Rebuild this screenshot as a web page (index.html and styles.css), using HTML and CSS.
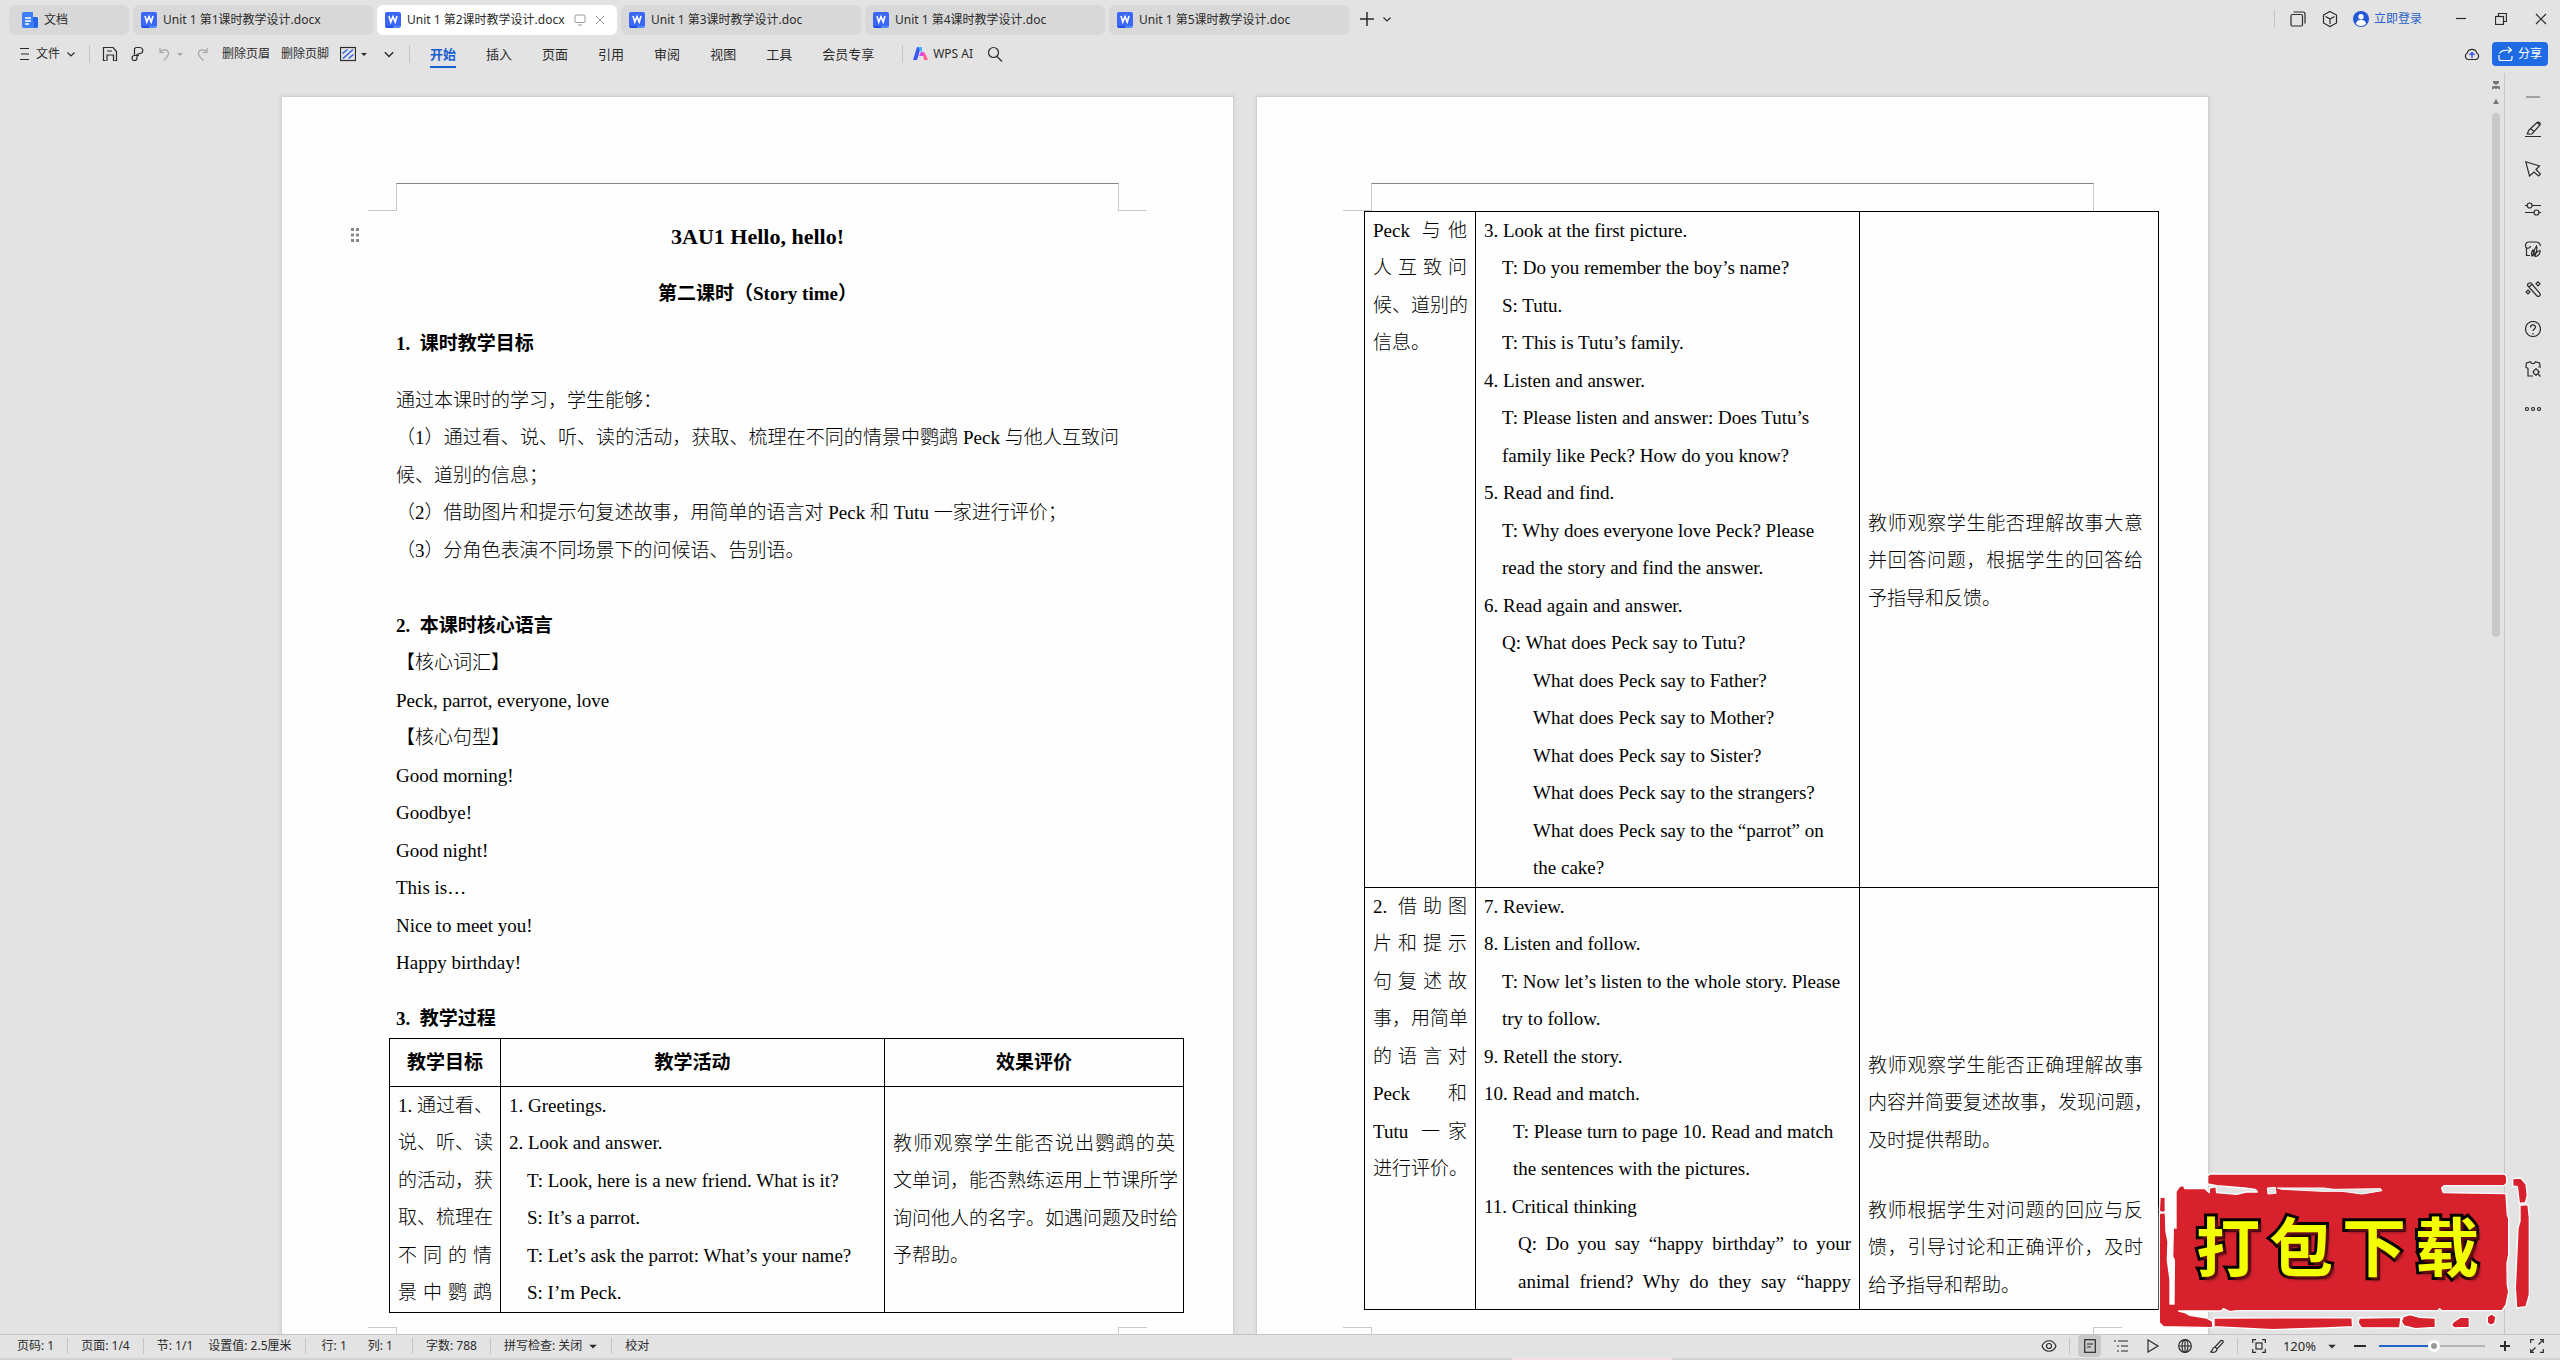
FILE: index.html
```html
<!DOCTYPE html>
<html lang="zh-CN">
<head>
<meta charset="utf-8">
<title>Unit 1 第2课时教学设计.docx</title>
<link rel="stylesheet" href="styles.css">
</head>
<body>
<svg width="0" height="0" class="defs" aria-hidden="true">
  <defs>
    <symbol id="w" viewBox="0 0 16 16"><path fill="#3b66f6" d="M2 0h12a2 2 0 0 1 2 2v12H0V2a2 2 0 0 1 2-2z"/><path fill="#1d4fe0" d="M0 14h8v2H2a2 2 0 0 1-2-2z"/><path fill="#4f8bff" d="M8 14h8a2 2 0 0 1-2 2H8z"/><path fill="none" stroke="#fff" stroke-width="1.6" d="M4 4l1.8 6L8 4.600l2.200 5.400L12 4"/></symbol>
    <symbol id="chev" viewBox="0 0 10 10"><path fill="none" stroke="currentColor" stroke-width="1.2" d="M1.500 3.500L5 7l3.500-3.500"/></symbol>
    <symbol id="caret" viewBox="0 0 8 8"><path fill="currentColor" d="M1 3h6L4 6z"/></symbol>
  </defs>
</svg>

<header class="titlebar">
  <div class="tabs">
    <button class="tab home"><svg width="16" height="16" viewBox="0 0 16 16"><path fill="#3f7ff5" d="M2 0h9v5h3a2 2 0 0 1 2 2v7a2 2 0 0 1-2 2H2a2 2 0 0 1-2-2V2a2 2 0 0 1 2-2z"/><path fill="#2563eb" d="M11 5h3a2 2 0 0 1 2 2v7a2 2 0 0 1-4 0z"/><path stroke="#fff" stroke-width="1.500" d="M3 6h6M3 9h6M3 12h4"/></svg>文档</button>
    <button class="tab"><svg width="16" height="16"><use href="#w"/></svg>Unit 1 第1课时教学设计.docx</button>
    <button class="tab active"><svg width="16" height="16"><use href="#w"/></svg>Unit 1 第2课时教学设计.docx
      <svg class="mon" width="12" height="12" viewBox="0 0 12 12"><rect x="1" y="1" width="10" height="7.500" rx="1"/><path d="M4 11h4"/></svg>
      <svg class="mon" width="10" height="10" viewBox="0 0 10 10"><path d="M1 1l8 8M9 1L1 9"/></svg></button>
    <button class="tab"><svg width="16" height="16"><use href="#w"/></svg>Unit 1 第3课时教学设计.doc</button>
    <button class="tab"><svg width="16" height="16"><use href="#w"/></svg>Unit 1 第4课时教学设计.doc</button>
    <button class="tab"><svg width="16" height="16"><use href="#w"/></svg>Unit 1 第5课时教学设计.doc</button>
  </div>
  <button class="newtab" aria-label="新建"><svg class="ln" width="16" height="16" viewBox="0 0 16 16"><path stroke-width="1.500" d="M8 1v14M1 8h14"/></svg><svg width="10" height="10"><use href="#chev"/></svg></button>
  <div class="winbar">
    <span class="sep"></span>
    <button aria-label="窗口"><svg class="ln" width="18" height="18" viewBox="0 0 18 18"><rect x="2" y="4.500" width="11.500" height="11.500" rx="1.500"/><path d="M4.500 2H14a2 2 0 0 1 2 2v9.500"/></svg></button>
    <button aria-label="应用"><svg class="ln" width="18" height="18" viewBox="0 0 18 18"><path d="M9 1.500l6.500 3.500v8L9 16.500 2.500 13V5zM4.500 6.500L9 9l4.500-2.500M9 9v5"/></svg></button>
    <button class="login"><svg width="16" height="16" viewBox="0 0 16 16"><circle cx="8" cy="8" r="8" fill="#2459d8"/><circle cx="8" cy="5.800" r="2.700" fill="#fff"/><path fill="#fff" d="M3 13c.5-3.500 2.500-4 5-4s4.500.5 5 4a7 7 0 0 1-10 0z"/></svg>立即登录</button>
    <div class="winctl">
      <button aria-label="最小化"><svg class="ln" width="12" height="12" viewBox="0 0 12 12"><path d="M1 5.500h10"/></svg></button>
      <button aria-label="还原"><svg class="ln" width="12" height="12" viewBox="0 0 12 12"><rect x=".5" y="3.500" width="8" height="8"/><path d="M3.500 3.500v-3h8v8h-3"/></svg></button>
      <button aria-label="关闭"><svg class="ln" width="12" height="12" viewBox="0 0 12 12"><path d="M1 1l10 10M11 1L1 11"/></svg></button>
    </div>
  </div>
</header>

<div class="toolbar">
  <button class="file"><svg class="ln" width="10" height="14" viewBox="0 0 10 14"><path d="M0 1.500h9M1 7h8M0 12.500h9"/></svg>文件<svg width="10" height="10"><use href="#chev"/></svg></button>
  <span class="sep"></span>
  <div class="quick">
    <button aria-label="保存"><svg class="ln" width="16" height="16" viewBox="0 0 16 16"><path d="M3.500 14.500h-2v-13h9.500l3.500 4v9h-2M5 15V9h6.500v6M5 5h5"/></svg></button>
    <button aria-label="格式刷"><svg class="ln" width="16" height="16" viewBox="0 0 16 16"><path d="M5.500 9.500V2.500L7 1.500h4a3 3 0 0 1 1.500 5.500L8 8.500V12a2.500 2.500 0 1 1-2.500-2.500H10"/></svg></button>
    <button class="dim" aria-label="撤销"><svg class="ln" width="16" height="16" viewBox="0 0 16 16"><path d="M4 2v4.500h4.500M4 6.500C6 3 12 3 12.500 7c.3 3-2 5-5 7.500"/></svg><svg width="8" height="8"><use href="#caret"/></svg></button>
    <button class="dim" aria-label="重做"><svg class="ln" width="16" height="16" viewBox="0 0 16 16"><path d="M12 2v4.500H7.500M12 6.500C10 3 4 3 3.500 7c-.3 3 2 5 5 7.500"/></svg></button>
    <button>删除页眉</button>
    <button>删除页脚</button>
    <button aria-label="底纹"><svg class="ln" width="16" height="16" viewBox="0 0 16 16"><rect x=".5" y="1.500" width="15" height="13"/><path stroke="#2f62d8" stroke-width="1.500" d="M2.500 7.500l5-4M3 12.500l10-9M8.500 12.500l5-4"/></svg><svg width="8" height="8"><use href="#caret"/></svg></button>
    <button class="more" aria-label="更多"><svg width="12" height="12"><use href="#chev"/></svg></button>
  </div>
  <span class="sep"></span>
  <nav class="menu">
    <button class="on">开始</button><button>插入</button><button>页面</button><button>引用</button><button>审阅</button><button>视图</button><button>工具</button><button>会员专享</button>
  </nav>
  <span class="sep"></span>
  <button class="ai"><svg width="15" height="13" viewBox="0 0 15 13"><path fill="#3b57f5" d="M4 0h4L4 13H0z"/><path fill="#42b7ff" d="M5 0h4v5L7 4z"/><path fill="#d545e8" d="M8 5h3l1 4H6z"/><path fill="#ff5c9a" d="M10 6l2 0 3 7h-4z"/></svg>WPS AI</button>
  <button aria-label="搜索"><svg class="ln" width="16" height="16" viewBox="0 0 16 16"><circle cx="6.500" cy="6.500" r="5"/><path d="M10 10.500l5 5"/></svg></button>
  <div class="share-group">
    <button aria-label="云同步"><svg class="ln" width="16" height="16" viewBox="0 0 16 16"><path d="M4 13.500a3.500 3.500 0 0 1-.8-6.500A5 5 0 0 1 12.800 7a3.500 3.500 0 0 1-.8 6.500z"/><path stroke="#3b57f5" stroke-width="1.500" d="M8 12V6.500M5.500 9L8 6.500 10.500 9"/></svg></button>
    <button class="share"><svg class="ln" width="15" height="15" viewBox="0 0 15 15"><path d="M1 9v3.500a2 2 0 0 0 2 2h9a2 2 0 0 0 2-2V10M1.500 7.500C3 4.500 6 4 13 4M10 1l3.500 3L10 7"/></svg>分享</button>
  </div>
</div>

<div class="main">
  <main class="workspace">
    <article class="page">
      <div class="margin-top"></div>
      <svg class="grip" width="10" height="14" viewBox="0 0 10 14" fill="#888"><path d="M1 0h3v3H1zM6 0h3v3H6zM1 5.500h3v3H1zM6 5.500h3v3H6zM1 11h3v3H1zM6 11h3v3H6z"/></svg>
      <h1>3AU1 Hello, hello!</h1>
      <h2 class="sub">第二课时（Story time）</h2>
      <h2>1.&nbsp; 课时教学目标</h2>
      <div class="lines">
        <p>通过本课时的学习，学生能够：</p>
        <p class="fill">（1）通过看、说、听、读的活动，获取、梳理在不同的情景中鹦鹉 Peck 与他人互致问</p>
        <p>候、道别的信息；</p>
        <p>（2）借助图片和提示句复述故事，用简单的语言对 Peck 和 Tutu 一家进行评价；</p>
        <p>（3）分角色表演不同场景下的问候语、告别语。</p>
        <p>&nbsp;</p>
        <p><b>2.&nbsp; 本课时核心语言</b></p>
        <p>【核心词汇】</p>
        <p>Peck, parrot, everyone, love</p>
        <p>【核心句型】</p>
        <p>Good morning!</p>
        <p>Goodbye!</p>
        <p>Good night!</p>
        <p>This is…</p>
        <p>Nice to meet you!</p>
        <p>Happy birthday!</p>
      </div>
      <h2>3.&nbsp; 教学过程</h2>
      <table>
        <colgroup><col class="goal"><col class="act"><col class="eval"></colgroup>
        <thead><tr><th>教学目标</th><th>教学活动</th><th>效果评价</th></tr></thead>
        <tbody><tr>
          <td class="fillall"><p>1. 通过看、</p><p>说、听、读</p><p>的活动，获</p><p>取、梳理在</p><p>不同的情</p><p>景中鹦鹉</p></td>
          <td><p>1. Greetings.</p><p>2. Look and answer.</p><p class="in">T: Look, here is a new friend. What is it?</p><p class="in">S: It’s a parrot.</p><p class="in">T: Let’s ask the parrot: What’s your name?</p><p class="in">S: I’m Peck.</p></td>
          <td class="mid"><p class="fill">教师观察学生能否说出鹦鹉的英</p><p class="fill">文单词，能否熟练运用上节课所学</p><p class="fill">询问他人的名字。如遇问题及时给</p><p>予帮助。</p></td>
        </tr></tbody>
      </table>
      <div class="margin-bottom"></div>
    </article>

    <article class="page second">
      <div class="margin-top"></div>
      <table>
        <colgroup><col class="goal"><col class="act"><col class="eval"></colgroup>
        <tbody>
        <tr>
          <td><p class="fill">Peck 与他</p><p class="fill">人互致问</p><p class="fill">候、道别的</p><p>信息。</p></td>
          <td><p>3. Look at the first picture.</p><p class="in">T: Do you remember the boy’s name?</p><p class="in">S: Tutu.</p><p class="in">T: This is Tutu’s family.</p><p>4. Listen and answer.</p><p class="in">T: Please listen and answer: Does Tutu’s</p><p class="in">family like Peck? How do you know?</p><p>5. Read and find.</p><p class="in">T: Why does everyone love Peck? Please</p><p class="in">read the story and find the answer.</p><p>6. Read again and answer.</p><p class="in">Q: What does Peck say to Tutu?</p><p class="in3">What does Peck say to Father?</p><p class="in3">What does Peck say to Mother?</p><p class="in3">What does Peck say to Sister?</p><p class="in3">What does Peck say to the strangers?</p><p class="in3">What does Peck say to the “parrot” on</p><p class="in3">the cake?</p></td>
          <td class="mid lower"><p class="fill">教师观察学生能否理解故事大意</p><p class="fill">并回答问题，根据学生的回答给</p><p>予指导和反馈。</p></td>
        </tr>
        <tr class="last">
          <td><p class="fill">2. 借助图</p><p class="fill">片和提示</p><p class="fill">句复述故</p><p class="fill">事，用简单</p><p class="fill">的语言对</p><p class="fill">Peck 和</p><p class="fill">Tutu 一家</p><p>进行评价。</p></td>
          <td><p>7. Review.</p><p>8. Listen and follow.</p><p class="in">T: Now let’s listen to the whole story. Please</p><p class="in">try to follow.</p><p>9. Retell the story.</p><p>10. Read and match.</p><p class="in2">T: Please turn to page 10. Read and match</p><p class="in2">the sentences with the pictures.</p><p>11. Critical thinking</p><p class="in2q fill">Q: Do you say “happy birthday” to your</p><p class="in2q fill">animal friend? Why do they say “happy</p></td>
          <td class="bottom"><p class="fill">教师观察学生能否正确理解故事</p><p class="fill">内容并简要复述故事，发现问题，</p><p>及时提供帮助。</p><div class="spacer"></div><p class="fill">教师根据学生对问题的回应与反</p><p class="fill">馈，引导讨论和正确评价，及时</p><p>给予指导和帮助。</p></td>
        </tr>
        </tbody>
      </table>
      <div class="margin-bottom"></div>
    </article>
  </main>

  <div class="scroll" aria-hidden="true">
    <svg width="8" height="8" viewBox="0 0 8 8" fill="#777"><path d="M1 0h6v2L4 4 1 2zM0 6l1-1h6l1 1v2H6V7H5v1H3V7H2v1H0z"/></svg>
    <svg width="6" height="5" viewBox="0 0 6 5" fill="#777"><path d="M3 0l3 5H0z"/></svg>
    <span class="thumb"></span>
  </div>

  <aside class="side">
    <span class="dash"></span>
    <button aria-label="编辑"><svg class="ln" width="16" height="16" viewBox="0 0 16 16"><path d="M0 15.500h16M2.500 13l1-3.500L12 1.500a2 2 0 0 1 3 2.500l-8 9H1.500M6 8l3 2.500M12 1.500l3 2.500"/></svg></button>
    <button aria-label="选择"><svg class="ln" width="16" height="16" viewBox="0 0 16 16"><path d="M.8.8L14.500 5 11 8.500l4.500 4.500-2 2L9 11l-4.500 4z"/></svg></button>
    <button aria-label="设置"><svg class="ln" width="16" height="16" viewBox="0 0 16 16"><path d="M0 4.500h2.500M7 4.500h9M0 11.500h9M14 11.500h2"/><circle cx="4.600" cy="4.500" r="2.500"/><circle cx="11.500" cy="11.500" r="2.500"/></svg></button>
    <button aria-label="稻壳"><svg class="ln" width="16" height="16" viewBox="0 0 16 16"><path d="M15.500 5C15 2 13 1 11 1H4a3.500 3.500 0 0 0-3.500 4C.5 8 5 8 5.500 5M1.500 7.500v7H5M7 15c-1-3 0-5 1-6 1 2 .5 4-.5 6zM9 14c-.5-4 1-7 2.500-9 1 3 0 7-2.500 9zM10 15.500c0-3 2-5 5-6 .5 3-2 6-5 6z"/></svg></button>
    <button aria-label="工具箱"><svg class="ln" width="16" height="16" viewBox="0 0 16 16"><path d="M2.500 4.500A2.500 2.500 0 0 1 6 2l9 10.500a2 2 0 0 1-3 2.500zM4 6l3-3"/><path d="M13 .8l2 2-2 2-2-2zM3 9l2 2-2 2-2-2z"/></svg></button>
    <button aria-label="帮助"><svg class="ln" width="16" height="16" viewBox="0 0 16 16"><circle cx="8" cy="8" r="7.500"/><path d="M5.500 6.500c0-3.500 5-3.300 5-.5 0 2-2.500 2-2.500 4M8 12v1.500"/></svg></button>
    <button aria-label="皮肤"><svg class="ln" width="16" height="16" viewBox="0 0 16 16"><path d="M8 15H3V7.500L.8 6 1.500 2 5.500.8c1 2.500 4 2.500 5 0L14.500 2l.8 4h-2"/><circle cx="11" cy="11" r="2.500"/><path d="M11 7v1.500M11 13.500V15M7.500 11h1M13 13l2.500 2.500M13.500 11H15"/></svg></button>
    <button aria-label="更多"><svg class="ln" width="16" height="6" viewBox="0 0 16 6"><circle cx="2" cy="3" r="1.500"/><circle cx="8" cy="3" r="1.500"/><circle cx="14" cy="3" r="1.500"/></svg></button>
  </aside>
</div>

<footer class="status">
  <span>页码: 1</span><i class="sep"></i><span>页面: 1/4</span><i class="sep"></i><span>节: 1/1</span><span class="gapped">设置值: 2.5厘米</span><i class="sep"></i><span class="pos">行: 1</span><span class="pos2">列: 1</span><i class="sep"></i><span>字数: 788</span><i class="sep"></i><button>拼写检查: 关闭<svg width="10" height="10" viewBox="0 0 8 8"><use href="#caret"/></svg></button><i class="sep"></i><span>校对</span>
  <div class="views">
    <button aria-label="护眼"><svg class="ln" width="16" height="14" viewBox="0 0 16 14"><path d="M1 7c3-7 11-7 14 0-3 7-11 7-14 0z"/><circle cx="8" cy="7" r="2.500"/></svg></button>
    <i class="sep"></i>
    <button class="cur" aria-label="页面视图"><svg class="ln" width="12" height="14" viewBox="0 0 12 14"><rect x=".7" y=".7" width="10.600" height="12.600"/><path d="M3 5h6M3 8h4"/></svg></button>
    <button aria-label="大纲"><svg class="ln" width="14" height="12" viewBox="0 0 14 12"><path d="M0 1h2M4 1h10M3 6h2M7 6h7M3 11h2M7 11h7"/></svg></button>
    <button aria-label="阅读"><svg class="ln" width="14" height="14" viewBox="0 0 14 14"><path d="M2 1l10 6-10 6z"/></svg></button>
    <button aria-label="Web"><svg class="ln" width="14" height="14" viewBox="0 0 14 14"><circle cx="7" cy="7" r="6.300"/><ellipse cx="7" cy="7" rx="3" ry="6.300"/><path d="M7 .7v12.600M.7 7h12.600"/></svg></button>
    <button aria-label="写作"><svg class="ln" width="14" height="14" viewBox="0 0 14 14"><path d="M5 8l6-6.500a1.500 1.500 0 0 1 2 2L7 10zM5 8c-3 0-2 4-4.500 5C4 14 7 13 7 10"/></svg></button>
    <i class="sep"></i>
    <button class="fit" aria-label="适应"><svg class="ln" width="14" height="14" viewBox="0 0 14 14"><path d="M.7 4V.7H4M10 .7h3.300V4M13.300 10v3.300H10M4 13.300H.7V10"/><rect x="4" y="4" width="6" height="6"/></svg></button>
    <button class="pct">120%<svg width="10" height="10" viewBox="0 0 8 8"><use href="#caret"/></svg></button>
    <button aria-label="缩小"><svg class="ln" width="14" height="12" viewBox="0 0 14 12"><path stroke-width="2" d="M1 6h12"/></svg></button>
    <input type="range" min="0" max="100" value="52" aria-label="缩放">
    <button aria-label="放大"><svg class="ln" width="12" height="12" viewBox="0 0 12 12"><path stroke-width="2" d="M6 1v10M1 6h10"/></svg></button>
    <button aria-label="全屏"><svg class="ln" width="14" height="14" viewBox="0 0 14 14"><path d="M.7 4V.7H4M10 .7h3.300V4M13.300 10v3.300H10M4 13.300H.7V10M8.500 5.500l4-4M5.500 8.500l-4 4"/></svg></button>
  </div>
</footer>
<div class="edge"></div>

<div class="stamp">
  <svg viewBox="54 36 1122 474" fill="#d7222e" stroke="#fff" stroke-width="4" stroke-linejoin="round" aria-hidden="true">
    <path d="M203 48L210 42H1094L1100 50V70L1094 76 912 77 905 84 910 98 1098 101 1102 165 1106 175V285L1101 310 1102 375 1106 395 1098 435 1086 452H905L899 446 893 452H290L270 455 250 446 244 453H116L135 458 150 466 200 474 218 484V503L70 500 58 488V160L76 158 78 215 84 245 82 300 90 360 90 432 102 432 103 300 98 290 100 200 108 205V95L118 80 130 76 135 86 195 86 208 98 208 84 228 80 230 98 290 103 318 96 352 96 346 88 312 84 230 77 203 72z"/>
    <path d="M60 112h16v42l-8 4-10-5zM222 474l414-1 2 27-80 4-160 5-176-9zM658 474l125-2-4 32-115-1-10-15zM790 470l20-6 30 8 46 2v28l-60 4-34-8-8-14zM940 486l20-14h28v30l-44 2-10-8zM1042 470l12-8 14 8-4 20-12 6-10-8zM1118 56l24-2 16 18 4 34-6 22-18 2-6-50-14-2zM1140 136l24-2 4 40v230l-10 36-28 4-4-60 8-180 6-20z"/>
    <path fill="#e3e3e3" stroke-width="3" d="M382 84l24-2 2 18-24 2zM412 84l140 0 30 4 140-2 4 6-60 10-60-8-60 0-120-6z"/>
  </svg>
  <div class="stamp-text"><span>打</span><span>包</span><span>下</span><span>载</span></div>
</div>
</body>
</html>
```
FILE: styles.css
```css
* { box-sizing: border-box; }
body {
  margin: 0;
  height: 100vh;
  display: flex;
  flex-direction: column;
  overflow: hidden;
  position: relative;
  background: #e3e3e3;
  color: #2b2b2b;
  font: 12px/16px "Noto Sans", "Noto Sans CJK SC", sans-serif;
}
button {
  display: flex;
  align-items: center;
  padding: 0;
  border: 0;
  background: none;
  color: inherit;
  font: inherit;
  white-space: nowrap;
}
svg { flex: none; }
.defs { position: absolute; }
.ln { fill: none; stroke: currentColor; stroke-width: 1.2; }
.sep { width: 1px; height: 18px; background: #c4c4c4; flex: none; }

/* title bar */
.titlebar { display: flex; align-items: center; height: 38px; padding-left: 9px; }
.tabs { display: flex; gap: 4px; align-self: flex-end; padding-bottom: 3px; }
.tab {
  width: 240px;
  height: 30px;
  padding: 0 8px;
  gap: 6px;
  border-radius: 6px;
  background: #d8d8d8;
}
.tab.home { width: 120px; padding-left: 13px; }
.tab.active { background: #fff; }
.mon { fill: none; stroke: #999; margin-left: 3px; }
.newtab { margin-left: 10px; gap: 7px; }
.winbar { display: flex; align-items: center; margin-left: auto; gap: 14px; }
.login { gap: 5px; color: #2a62c8; }
.winctl { display: flex; gap: 2px; margin-left: 6px; }
.winctl button { width: 38px; height: 30px; justify-content: center; }

/* tool bar */
.toolbar { display: flex; align-items: center; height: 35px; padding: 0 12px 4px 20px; }
.file { gap: 6px; margin-right: 13px; }
.quick { display: flex; align-items: center; gap: 11px; padding: 0 10px 0 12px; }
.quick button { gap: 4px; }
.quick .dim { color: #a8a8a8; }
.quick .more { width: 20px; justify-content: center; }
.menu { display: flex; gap: 30px; margin: 0 28px 0 20px; }
.menu button { position: relative; height: 28px; font-size: 13px; }
.menu .on { color: #1a5fd0; font-weight: 700; }
.menu .on::after {
  content: "";
  position: absolute;
  inset: auto 0 0;
  height: 2px;
  background: #1a5fd0;
}
.ai { gap: 5px; margin: 0 14px 0 10px; }
.share-group { display: flex; align-items: center; gap: 12px; margin-left: auto; }
.share {
  height: 24px;
  padding: 0 6px;
  gap: 5px;
  border-radius: 4px;
  background: #1f6be6;
  color: #fff;
}

/* document area */
.main { flex: 1; display: flex; min-height: 0; }
.workspace {
  flex: 1;
  display: flex;
  justify-content: center;
  gap: 24px;
  padding-top: 24px;
  min-width: 0;
  overflow: hidden;
}
.page {
  flex: 0 1 951px;
  min-width: 0;
  display: flex;
  flex-direction: column;
  position: relative;
  padding: 86px 114px 0;
  background: #fefefe;
  box-shadow: 0 0 0 1px #d0d0d0, 0 0 3px 2px #d6d6d6;
  color: #000;
  font: 300 19px/37px "Liberation Serif", "Noto Sans CJK SC", serif;
}
.margin-top, .margin-bottom { position: relative; flex: none; }
.margin-top {
  height: 28px;
  border: solid #c8c8c8;
  border-width: 0 1px;
  border-top: 1px solid #868686;
}
.margin-bottom {
  height: 7px;
  margin-top: auto;
  border: solid #c8c8c8;
  border-width: 0 1px;
}
.margin-top::before, .margin-top::after,
.margin-bottom::before, .margin-bottom::after {
  content: "";
  position: absolute;
  width: 29px;
  height: 1px;
  background: #c8c8c8;
}
.margin-top::before, .margin-top::after { bottom: 0; }
.margin-bottom::before, .margin-bottom::after { top: 0; }
.margin-top::before, .margin-bottom::before { right: 100%; }
.margin-top::after, .margin-bottom::after { left: 100%; }
.second .margin-top::after { display: none; }
.grip { position: absolute; left: 68px; top: 131px; }
h1, h2, p { margin: 0; }
b { font-weight: 700; }
h1 { font-size: 22px; line-height: 52px; text-align: center; }
h2 { font-size: 19px; line-height: 38px; margin: 12px 0 19px; }
h2.sub { text-align: center; margin-bottom: 0; }
.lines + h2 { margin: 18px 0 0; }
p { white-space: nowrap; }
p:nth-child(even) { line-height: 38px; }
.fill, .fillall p { text-align-last: justify; }

table {
  table-layout: fixed;
  width: 795px;
  margin-left: -7px;
  border-collapse: collapse;
}
.goal { width: 111px; }
.act { width: 384px; }
th, td { padding: 0 8px; border: 1px solid #000; vertical-align: top; }
th { height: 48px; vertical-align: middle; }
.last { height: 422px; }
td.mid { vertical-align: middle; }
td.lower { padding-top: 22px; }
td.bottom { vertical-align: bottom; padding-bottom: 5px; }
.spacer { height: 33px; }
.second td:last-child { padding-right: 15px; }
.in { padding-left: 18px; }
.in2 { padding-left: 29px; }
.in2q { padding-left: 34px; }
.in3 { padding-left: 49px; }

.scroll {
  width: 14px;
  display: flex;
  flex-direction: column;
  align-items: center;
  gap: 10px;
  padding: 8px 2px 0 0;
}
.thumb { width: 8px; height: 524px; margin-top: -1px; border-radius: 4px; background: #c9c9c9; }
.side {
  width: 56px;
  display: flex;
  flex-direction: column;
  align-items: center;
  padding: 23px 0 0 1px;
  border-left: 1px solid #c8c8c8;
}
.dash { width: 14px; height: 2px; margin-bottom: 11px; background: #a0a0a6; }
.side button { height: 40px; }

/* status bar */
.status {
  display: flex;
  align-items: center;
  gap: 13px;
  height: 24px;
  padding: 0 7px 1px 17px;
  border-top: 1px solid #c4c4c4;
}
.status .sep { height: 16px; }
.gapped { margin-left: 2px; }
.pos { margin-left: 3px; }
.pos2 { margin: 0 6px 0 8px; }
.status button { gap: 6px; }
.views { display: flex; align-items: center; margin-left: auto; }
.views button { width: 32px; height: 22px; justify-content: center; }
.views .sep { margin: 0 4px; }
.views .cur { width: 23px; margin: 0 4px; border-radius: 4px; background: #c9c9c9; }
.views .fit { width: 34px; }
.views .pct { width: 68px; font-size: 13px; gap: 11px; }
input[type="range"] {
  appearance: none;
  width: 106px;
  height: 12px;
  margin: 0 4px 0 3px;
  background: linear-gradient(90deg, #1f62c8 52%, #b4b4b4 52%) center / 100% 2px no-repeat;
}
input[type="range"]::-webkit-slider-thumb {
  appearance: none;
  width: 12px;
  height: 12px;
  border: 3px solid #fff;
  border-radius: 50%;
  background: #999;
}
.edge {
  height: 2px;
  background: linear-gradient(#f6dfe4, #f6dfe4) 63% 0 / 160px 2px no-repeat #d2d2d2;
}

/* download stamp laid over the window */
.stamp { position: absolute; right: 28px; bottom: 30px; width: 374px; height: 158px; }
.stamp svg { display: block; width: 100%; height: 100%; }
.stamp-text {
  position: absolute;
  inset: 0;
  display: flex;
  gap: 9px;
  padding: 35px 0 0 38px;
  color: #f2ff00;
  font: 700 64px/72px "Noto Sans CJK SC", sans-serif;
  -webkit-text-stroke: 6px #000;
  paint-order: stroke fill;
  text-shadow: 3px 3px 3px #6b1018;
}
```
